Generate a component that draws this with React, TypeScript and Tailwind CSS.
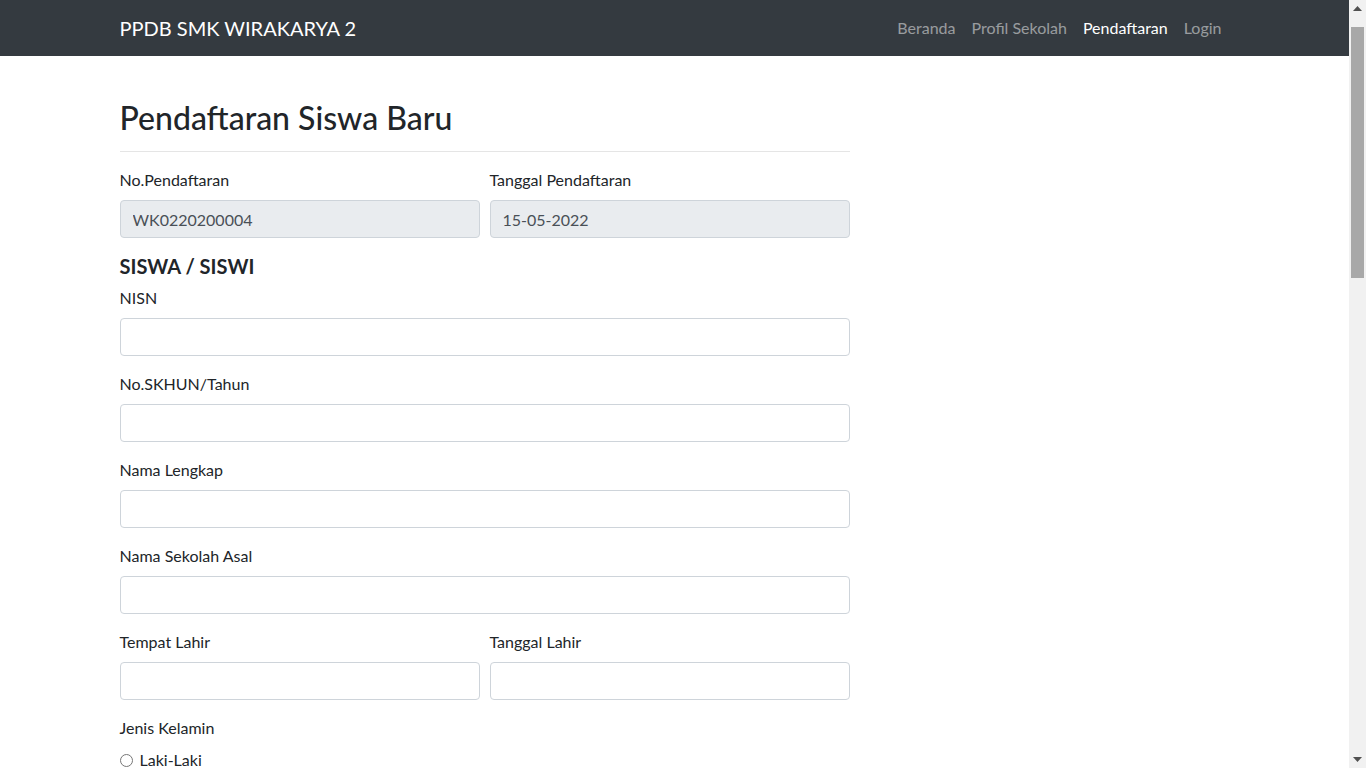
import React from 'react'

const FONT = { fontFamily: 'Lato, "Open Sans", sans-serif' }

const inputCls =
  'block w-full h-[38px] px-3 rounded-[4px] border border-[#ced4da] bg-white text-[16px] text-[#495057] outline-none'
const readonlyCls =
  'block w-full h-[38px] px-3 rounded-[4px] border border-[#ced4da] bg-[#e9ecef] text-[16px] text-[#495057] outline-none'

const Field: React.FC<{ label: string; value?: string; readOnly?: boolean }> = ({ label, value, readOnly }) => (
  <div className="mb-4">
    <label className="block mb-2 leading-6">{label}</label>
    <input className={readOnly ? readonlyCls : inputCls} defaultValue={value} readOnly={readOnly} />
  </div>
)

const Radio: React.FC<{ name: string; label: string }> = ({ name, label }) => (
  <label className="flex items-center leading-6 gap-[7px]">
    <input type="radio" name={name} className="w-[13px] h-[13px] m-0 accent-[#007bff]" />
    {label}
  </label>
)

const NAV = ['Beranda', 'Profil Sekolah', 'Pendaftaran', 'Login']

// classic windows-style scrollbar, drawn since the headless page hides it
const Scrollbar = () => (
  <div className="w-[17px] h-full bg-[#f1f1f1] flex flex-col items-center shrink-0">
    <div className="h-[17px] flex items-center justify-center">
      <svg width="9" height="5" viewBox="0 0 9 5">
        <path d="M0 5 L4.5 0 L9 5 Z" fill="#505050" />
      </svg>
    </div>
    <div className="w-[13px] h-[251px] mt-[10px] bg-[#a8a8a8]" />
    <div className="flex-1" />
    <div className="h-[17px] flex items-center justify-center">
      <svg width="9" height="5" viewBox="0 0 9 5">
        <path d="M0 0 L4.5 5 L9 0 Z" fill="#505050" />
      </svg>
    </div>
  </div>
)

export default function App() {
  return (
    <div className="h-screen flex bg-white text-[#212529] text-[16px]" style={FONT}>
      <div className="flex-1 overflow-y-auto [scrollbar-width:none]">
        <nav className="h-14 bg-[#343a40]">
          <div className="mx-auto w-[1140px] h-full px-[15px] flex items-center justify-between">
            <span className="text-[20px] text-white leading-[30px]">PPDB SMK WIRAKARYA 2</span>
            <ul className="flex">
              {NAV.map((n) => (
                <li key={n}>
                  <a
                    className={
                      'block px-2 leading-6 ' + (n === 'Pendaftaran' ? 'text-white' : 'text-[rgba(255,255,255,0.5)]')
                    }
                  >
                    {n}
                  </a>
                </li>
              ))}
            </ul>
          </div>
        </nav>

        <div className="mx-auto w-[1140px] px-[15px] pt-[43px] pb-16">
          <div className="w-[730px]">
            <h2 className="text-[32px] font-medium leading-[38px] mb-2">Pendaftaran Siswa Baru</h2>
            <hr className="border-0 border-t border-[rgba(0,0,0,0.1)] mt-[14px] mb-4" />

            <div className="grid grid-cols-2 gap-x-[10px]">
              <Field label="No.Pendaftaran" value="WK0220200004" readOnly />
              <Field label="Tanggal Pendaftaran" value="15-05-2022" readOnly />
            </div>

            <h5 className="text-[20px] font-bold leading-6 mb-2">SISWA / SISWI</h5>
            <Field label="NISN" />
            <Field label="No.SKHUN/Tahun" />
            <Field label="Nama Lengkap" />
            <Field label="Nama Sekolah Asal" />
            <div className="grid grid-cols-2 gap-x-[10px]">
              <Field label="Tempat Lahir" />
              <Field label="Tanggal Lahir" />
            </div>

            <div className="mb-4">
              <label className="block mb-2 leading-6">Jenis Kelamin</label>
              <Radio name="jk" label="Laki-Laki" />
              <Radio name="jk" label="Perempuan" />
            </div>

            <Field label="Agama" />
            <Field label="Alamat" />
            <Field label="No. Telepon / HP" />
            <Field label="Email" />

            <h5 className="text-[20px] font-bold leading-6 mb-2">ORANG TUA / WALI</h5>
            <Field label="Nama Ayah" />
            <Field label="Pekerjaan Ayah" />
            <Field label="Nama Ibu" />
            <Field label="Pekerjaan Ibu" />
            <Field label="Alamat Orang Tua" />
            <Field label="No. Telepon Orang Tua" />
            <Field label="Penghasilan Orang Tua" />

            <h5 className="text-[20px] font-bold leading-6 mb-2">JURUSAN</h5>
            <Field label="Pilihan Jurusan 1" />
            <Field label="Pilihan Jurusan 2" />
            <Field label="Nilai Rata-rata UN" />
            <Field label="Prestasi" />

            <button className="mt-2 h-[38px] px-3 rounded-[4px] bg-[#007bff] text-white">Daftar</button>
          </div>
        </div>
      </div>
      <Scrollbar />
    </div>
  )
}
